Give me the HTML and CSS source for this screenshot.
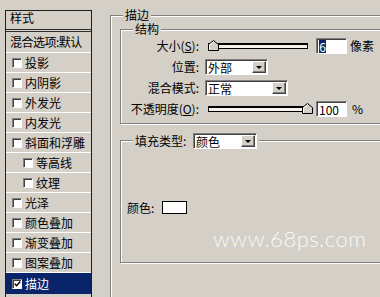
FILE: index.html
```html
<!DOCTYPE html>
<html lang="zh-CN">
<head>
<meta charset="utf-8">
<title>图层样式 - 描边</title>
<link rel="stylesheet" href="styles.css">
</head>
<body>
<div class="page">
  <div class="styles-list">
    <div class="list-head">样式</div>
    <div class="blend">混合选项:默认</div>
    <div class="item"><span class="cb"></span>投影</div>
    <div class="item"><span class="cb"></span>内阴影</div>
    <div class="item"><span class="cb"></span>外发光</div>
    <div class="item"><span class="cb"></span>内发光</div>
    <div class="item"><span class="cb"></span>斜面和浮雕</div>
    <div class="item sub"><span class="cb"></span>等高线</div>
    <div class="item sub"><span class="cb"></span>纹理</div>
    <div class="item"><span class="cb"></span>光泽</div>
    <div class="item"><span class="cb"></span>颜色叠加</div>
    <div class="item"><span class="cb"></span>渐变叠加</div>
    <div class="item"><span class="cb"></span>图案叠加</div>
    <div class="item selected"><span class="cb"><svg class="check" width="8" height="8" viewBox="0 0 8 8"><path d="M0.8 3.6 L3 5.9 L7.2 1.2" fill="none" stroke="#000" stroke-width="1.6"/></svg></span>描边</div>
  </div>

  <div class="group outer">
    <div class="gtitle">描边</div>

    <div class="group inner structure">
      <div class="gtitle">结构</div>

      <div class="row">
        <span class="lbl">大小(<u>S</u>):</span>
        <div class="slider">
          <span class="track"></span>
          <svg class="thumb thumb-min" width="11" height="11" viewBox="0 0 11 11"><path d="M0.5 4.5 L5.5 0.5 L10.5 4.5 L10.5 10.5 L0.5 10.5 Z" fill="#d4d0c8" stroke="#000"/><path d="M1.5 10 L1.5 5 L5.5 1.8" fill="none" stroke="#fff"/></svg>
        </div>
        <div class="num"><span class="hl">6</span></div>
        <span class="unit">像素</span>
      </div>

      <div class="row">
        <span class="lbl">位置:</span>
        <div class="select sel-pos"><span class="val">外部</span><span class="btn"></span></div>
      </div>

      <div class="row">
        <span class="lbl">混合模式:</span>
        <div class="select sel-mode"><span class="val">正常</span><span class="btn"></span></div>
      </div>

      <div class="row">
        <span class="lbl">不透明度(<u>O</u>):</span>
        <div class="slider">
          <span class="track"></span>
          <svg class="thumb thumb-max" width="11" height="11" viewBox="0 0 11 11"><path d="M0.5 4.5 L5.5 0.5 L10.5 4.5 L10.5 10.5 L0.5 10.5 Z" fill="#d4d0c8" stroke="#000"/><path d="M1.5 10 L1.5 5 L5.5 1.8" fill="none" stroke="#fff"/></svg>
        </div>
        <div class="num">100</div>
        <span class="unit pct">%</span>
      </div>
    </div>

    <div class="group inner fill">
      <div class="gtitle ftitle">
        <span class="flbl">填充类型:</span>
        <div class="select sel-fill"><span class="val">颜色</span><span class="btn"></span></div>
      </div>
      <div class="color-row">
        <span class="clbl">颜色:</span>
        <span class="swatch"></span>
      </div>
    </div>
  </div>
  <div class="watermark">www.68ps.com</div>
</div>
</body>
</html>
```

FILE: styles.css
```css
* { box-sizing: border-box; }

html, body {
  margin: 0;
  padding: 0;
  overflow: hidden;
}

body {
  width: 380px;
  height: 297px;
  background: #d4d0c8;
  color: #000;
  font-family: "Noto Sans CJK SC", "Liberation Sans", sans-serif;
  font-size: 12px;
  line-height: 12px;
}

.page {
  position: relative;
  display: flex;
  align-items: flex-start;
  width: 380px;
  height: 297px;
  overflow: hidden;
}

/* ---------- left list ---------- */
.styles-list {
  flex: none;
  width: 87px;
  height: 300px;
  margin: 10px 0 0 5px;
  border: 1px solid #1e1e1e;
  border-bottom: none;
}

.list-head {
  height: 21px;
  padding: 1px 0 0 4px;
  border-bottom: 3px double #303030;
}

.blend {
  height: 21px;
  padding: 4px 0 0 4px;
  border-bottom: 1px solid #fff;
  white-space: nowrap;
  letter-spacing: -0.5px;
}

.item {
  display: flex;
  align-items: center;
  height: 20px;
  padding-left: 6px;
  border-bottom: 1px solid #fff;
  white-space: nowrap;
}

.item.sub { padding-left: 17px; }

.item.selected {
  height: 21px;
  background: #0a246a;
  color: #fff;
  border-bottom: none;
}

.cb {
  display: flex;
  align-items: center;
  justify-content: center;
  width: 10px;
  height: 10px;
  margin-right: 3px;
  background: #fff;
  border: 1px solid;
  border-color: #808080 #fff #fff #808080;
  box-shadow: inset 1px 1px 0 #404040;
}

.check { display: block; margin: 1px 0 0 1px; }

/* ---------- group boxes ---------- */
.group {
  border: 1px solid #808080;
  box-shadow: inset 1px 1px 0 #fff, 1px 1px 0 #fff;
}

.outer {
  flex: none;
  width: 300px;
  height: 320px;
  margin: 15px 0 0 18px;
}

.gtitle {
  display: flex;
  align-items: center;
  width: max-content;
  margin: -7px 0 0 12px;
  padding: 0 2px;
  background: #d4d0c8;
  line-height: 12px;
}

.inner {
  width: 290px;
  margin-left: 9px;
}

.structure {
  margin-top: 8px;
  padding-bottom: 4px;
}

.row {
  display: flex;
  align-items: center;
  height: 21px;
}

.lbl {
  width: 78px;
  text-align: right;
  white-space: nowrap;
}

.lbl u { text-decoration-thickness: 1px; }

/* slider */
.slider {
  position: relative;
  width: 100px;
  height: 11px;
  margin-left: 9px;
}

.track {
  display: block;
  width: 100px;
  height: 6px;
  margin-top: 3px;
  background: #f2f1ec;
  border: 1px solid #000;
  border-top-width: 2px;
}

.thumb {
  position: absolute;
  top: 0;
  display: block;
}

.thumb-min { left: 0; }
.thumb-max { left: 94px; }

/* number fields */
.num {
  width: 31px;
  height: 16px;
  margin-left: 8px;
  padding: 1px 0 0 2px;
  background: #fff;
  border: 1px solid;
  border-color: #808080 #fff #fff #808080;
  box-shadow: inset 1px 1px 0 #404040;
  line-height: 13px;
}

.hl {
  display: inline-block;
  width: 7px;
  height: 13px;
  background: #0a246a;
  color: #fff;
  text-align: center;
}

.unit { margin-left: 3px; }
.unit.pct { margin-left: 5px; }

/* drop-down */
.select {
  display: flex;
  height: 16px;
  padding: 1px;
  background: #fff;
  border: 1px solid;
  border-color: #808080 #fff #fff #808080;
  box-shadow: inset 1px 1px 0 #404040;
}

.sel-pos { width: 63px; margin-left: 6px; }
.sel-mode { width: 83px; margin-left: 6px; }
.sel-fill { width: 64px; margin-left: 2px; }

.val {
  flex: 1;
  padding: 1px 0 0 1px;
  line-height: 12px;
}

.btn {
  display: flex;
  align-items: center;
  justify-content: center;
  width: 14px;
  height: 12px;
  background: #d4d0c8;
  border: 1px solid;
  border-color: #fff #404040 #404040 #fff;
  box-shadow: inset -1px -1px 0 #808080;
}

.btn::after {
  content: "";
  width: 0;
  height: 0;
  border-left: 3px solid transparent;
  border-right: 3px solid transparent;
  border-top: 3px solid #000;
  margin-top: 1px;
}

/* fill group */
.fill {
  margin-top: 16px;
  padding-bottom: 47px;
}

.ftitle {
  height: 15px;
  margin-top: -8px;
}

.flbl {
  width: 56px;
  white-space: nowrap;
}

.color-row {
  display: flex;
  align-items: center;
  height: 15px;
  margin-top: 52px;
  padding-left: 6px;
}

.clbl { width: 35px; }

.swatch {
  width: 25px;
  height: 13px;
  background: #fff;
  border: 1px solid #000;
}

/* watermark overlay */
.watermark {
  position: absolute;
  left: 213px;
  top: 226px;
  font-family: "Lato", "DejaVu Sans", sans-serif;
  font-weight: 300;
  font-size: 22px;
  line-height: 26px;
  letter-spacing: 0.5px;
  color: rgba(255, 255, 255, 0.88);
}
```
